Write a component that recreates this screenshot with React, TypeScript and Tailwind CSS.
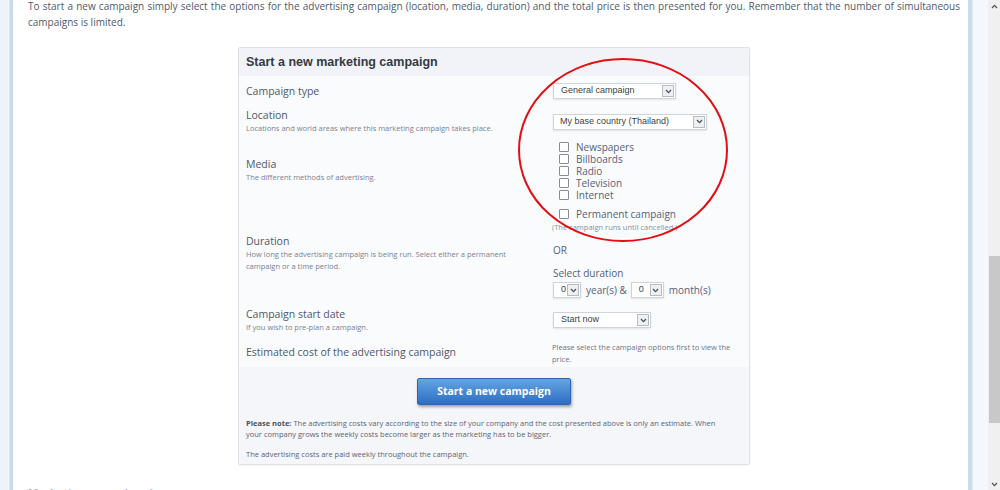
import React from 'react';

const Chevron = () => (
  <svg width="7" height="5" viewBox="0 0 7 5">
    <path d="M1 1 L3.5 3.6 L6 1" fill="none" stroke="#4a4f58" strokeWidth="1.3" />
  </svg>
);

const Select = ({ className, value }: { className: string; value: string }) => (
  <div
    className={`${className} h-[16px] bg-white border border-[#cfd3da] shadow-[0_1px_2px_rgba(0,0,0,0.10)] flex items-center justify-between pr-[1px] font-['Liberation_Sans',sans-serif] text-[9px] text-[#3a3f48]`}
  >
    <span>{value}</span>
    <span className="w-[12px] h-[12px] border border-[#b7bcc4] bg-[#eef0f3] flex items-center justify-center">
      <Chevron />
    </span>
  </div>
);

const Box = () => <span className="w-[10px] h-[10px] border border-[#868c96] bg-white rounded-[1px] shrink-0" />;

const Label = ({ title, desc }: { title: string; desc?: string }) => (
  <div className="w-[307px] shrink-0">
    <div className="text-[10.5px] leading-[13px] text-[#4e586c]">{title}</div>
    {desc && <div className="text-[7.5px] leading-[12px] text-[#7b8190] pr-[40px]">{desc}</div>}
  </div>
);

const media = ['Newspapers', 'Billboards', 'Radio', 'Television', 'Internet'];

export default function App() {
  return (
    <div className="relative w-[1000px] h-[490px] overflow-hidden flex font-['Open_Sans',sans-serif]">
      <div className="w-[9px] bg-[#eef3f9]" />
      <div className="w-[4px] bg-[#c9d8ea] border-l border-[#dde7f2]" />

      <main className="w-[955px] bg-white pl-[15px] pr-[8px]">
        <p className="mt-[-2px] text-[10px] leading-[16px] text-[#4f596d] text-justify">
          To start a new campaign simply select the options for the advertising campaign (location, media, duration) and the total price is then presented for you. Remember that the number of simultaneous campaigns is limited.
        </p>

        <section className="ml-[210px] mt-[17px] w-[512px] border border-[#dde1e8] rounded-[2px] shadow-[0_1px_2px_rgba(0,0,0,0.05)] bg-[#fafbfd]">
          <div className="h-[28px] bg-[#f1f3f8] px-[7px] pt-[1px] flex items-center font-['Liberation_Sans',sans-serif] font-bold text-[12.5px] text-[#333a45]">
            Start a new marketing campaign
          </div>

          <div className="px-[7px]">
            <div className="h-[30px] flex items-center">
              <Label title="Campaign type" />
              <Select className="w-[123px] pl-[7px]" value="General campaign" />
            </div>

            <div className="h-[31px] flex items-center">
              <Label title="Location" desc="Locations and world areas where this marketing campaign takes place." />
              <Select className="w-[154px] pl-[6px]" value="My base country (Thailand)" />
            </div>

            <div className="h-[67px] flex items-center">
              <Label title="Media" desc="The different methods of advertising." />
              <div className="flex flex-col pl-[6px]">
                {media.map((m) => (
                  <div key={m} className="h-[12px] flex items-center gap-[7px] text-[10px] text-[#56607a]">
                    <Box />
                    <span className="mt-[2px]">{m}</span>
                  </div>
                ))}
              </div>
            </div>

            <div className="h-[98px] flex items-center">
              <Label
                title="Duration"
                desc="How long the advertising campaign is being run. Select either a permanent campaign or a time period."
              />
              <div className="flex flex-col">
                <div className="h-[12px] flex items-center gap-[7px] pl-[6px] text-[10px] text-[#56607a]">
                  <Box />
                  <span className="mt-[1px]">Permanent campaign</span>
                </div>
                <div className="mt-[2px] ml-[-1px] text-[7.5px] leading-[11px] text-[#8a909c]">(The campaign runs until cancelled.)</div>
                <div className="mt-[11px] text-[10px] leading-[13px] text-[#56607a]">OR</div>
                <div className="mt-[10px] text-[10px] leading-[13px] text-[#56607a]">Select duration</div>
                <div className="mt-[2px] flex items-center text-[10px] text-[#56607a]">
                  <Select className="w-[28px] pl-[7px]" value="0" />
                  <span className="ml-[5px]">year(s) &amp;</span>
                  <Select className="w-[33px] pl-[7px] ml-[4px]" value="0" />
                  <span className="ml-[5px]">month(s)</span>
                </div>
              </div>
            </div>

            <div className="h-[36px] flex items-center">
              <Label title="Campaign start date" desc="If you wish to pre-plan a campaign." />
              <Select className="w-[98px] pl-[7px]" value="Start now" />
            </div>

            <div className="h-[29px] flex items-center">
              <Label title="Estimated cost of the advertising campaign" />
              <div className="ml-[-1px] text-[7.5px] leading-[12px] text-[#6f7584]">
                Please select the campaign options first to view the price.
              </div>
            </div>
          </div>

          <div className="bg-[#f5f6fa] px-[7px] pt-[11px] pb-[4px]">
            <div className="flex justify-center">
              <button className="w-[154px] h-[27px] rounded-[2px] bg-gradient-to-b from-[#64a6e4] to-[#2f6dc1] border border-[#2d66b3] shadow-[1px_2px_3px_rgba(0,0,0,0.35)] text-white font-bold text-[10.5px]">
                Start a new campaign
              </button>
            </div>
            <p className="mt-[13px] pr-[20px] text-[7.5px] leading-[11px] text-[#5d6473]">
              <b className="text-[#4a505c]">Please note:</b> The advertising costs vary according to the size of your company and the cost presented above is only an estimate. When your company grows the weekly costs become larger as the marketing has to be bigger.
            </p>
            <p className="mt-[9px] text-[7.5px] leading-[11px] text-[#5d6473]">
              The advertising costs are paid weekly throughout the campaign.
            </p>
          </div>
        </section>

        <h2 className="mt-[20px] text-[11px] font-bold text-[#a7adbb]">Marketing campaigns in progress</h2>
      </main>

      <div className="w-[5px] bg-[#cddbeb] border-r border-[#e2eaf4]" />
      <div className="w-[15px] bg-[#f4f7fb]" />

      <div className="w-[12px] bg-[#f0f0f0] flex flex-col items-center">
        <div className="h-[12px] flex items-center justify-center">
          <svg width="7" height="5" viewBox="0 0 7 5">
            <path d="M1 4 L3.5 1.4 L6 4" fill="none" stroke="#505050" strokeWidth="1.2" />
          </svg>
        </div>
        <div className="mt-[244px] w-[11px] h-[167px] bg-[#c8c8c8]" />
        <div className="mt-auto h-[12px] flex items-center justify-center">
          <svg width="7" height="5" viewBox="0 0 7 5">
            <path d="M1 1 L3.5 3.6 L6 1" fill="none" stroke="#505050" strokeWidth="1.2" />
          </svg>
        </div>
      </div>

      <svg className="absolute left-[516px] top-[57px]" width="216" height="188" viewBox="0 0 216 188">
        <ellipse cx="107" cy="93" rx="104" ry="91" fill="none" stroke="#e30f12" strokeWidth="2" />
      </svg>
    </div>
  );
}
